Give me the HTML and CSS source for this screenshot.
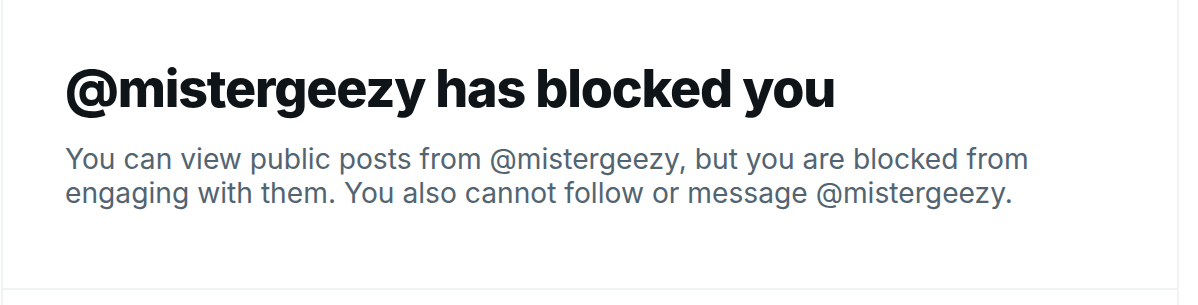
FILE: index.html
```html
<!DOCTYPE html>
<html lang="en">
<head>
<meta charset="utf-8">
<title>Blocked</title>
<link rel="stylesheet" href="styles.css">
</head>
<body>
<main class="column">
  <section class="empty">
    <h1 class="empty-title">@mistergeezy has blocked you</h1>
    <p class="empty-text">You can view public posts from @mistergeezy, but you are blocked from engaging with them. You also cannot follow or message @mistergeezy.</p>
  </section>
  <div class="rest"></div>
</main>
</body>
</html>
```

FILE: styles.css
```css
html, body {
  margin: 0;
  padding: 0;
  background: #ffffff;
}
body {
  font-family: Inter, "Noto Sans", sans-serif;
  -webkit-font-smoothing: antialiased;
}
.column {
  margin-left: 1px;
  width: 1174px;
  height: 305px;
  border-left: 2px solid #eff3f4;
  border-right: 2px solid #eff3f4;
  display: flex;
  flex-direction: column;
}
.empty {
  padding: 58px 64px 0 62px;
  height: 230px;
  border-bottom: 2px solid #eff3f4;
}
.empty-title {
  margin: 0;
  font-size: 52px;
  line-height: 62px;
  font-weight: 800;
  color: #0f1419;
  letter-spacing: -1.2px;
}
.empty-text {
  margin: 23px 0 0;
  font-size: 28.2px;
  line-height: 33.5px;
  font-weight: 400;
  color: #536471;
  max-width: 1000px;
}
```
